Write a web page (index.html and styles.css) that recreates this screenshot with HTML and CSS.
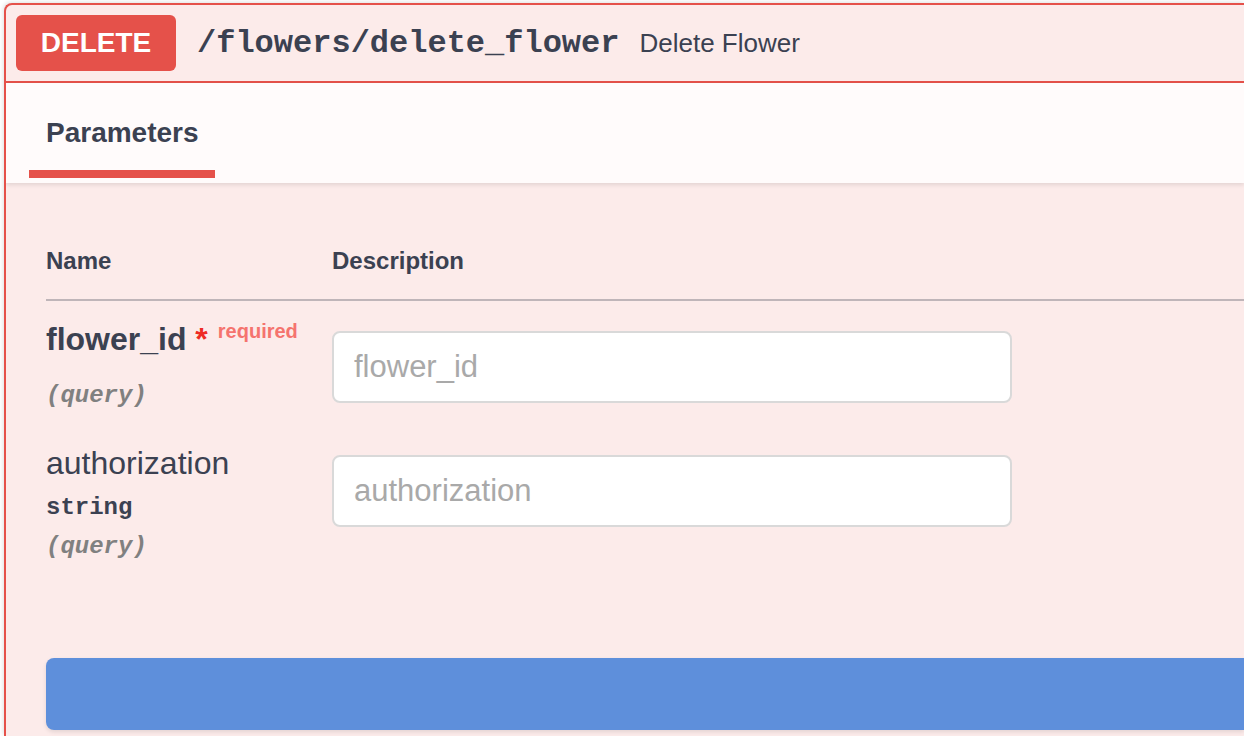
FILE: index.html
```html
<!DOCTYPE html>
<html>
<head>
<meta charset="utf-8">
<link rel="stylesheet" href="styles.css">
</head>
<body>
<div class="opblock">
  <div class="summary">
    <span class="method">DELETE</span>
    <span class="path">/flowers/delete_flower</span>
    <span class="summary-desc">Delete Flower</span>
  </div>
  <div class="section-header">
    <div class="tab">Parameters</div>
  </div>
  <div class="table-container">
    <div class="thead">
      <div class="th">Name</div>
      <div class="th">Description</div>
    </div>
    <div class="prow">
      <div class="pcol">
        <div class="pname required">flower_id<span class="star">&nbsp;*</span><span class="req">required</span></div>
        <div class="ptype"></div>
        <div class="pin">(query)</div>
      </div>
      <div class="dcol">
        <input class="pinput" type="text" placeholder="flower_id">
      </div>
    </div>
    <div class="prow">
      <div class="pcol">
        <div class="pname">authorization</div>
        <div class="ptype">string</div>
        <div class="pin">(query)</div>
      </div>
      <div class="dcol">
        <input class="pinput" type="text" placeholder="authorization">
      </div>
    </div>
    <div class="execute-wrapper">
      <button class="execute" type="button"></button>
    </div>
  </div>
</div>
</body>
</html>
```

FILE: styles.css
```css
html, body {
  margin: 0;
  padding: 0;
  overflow: hidden;
  background: #ffffff;
}

body {
  font-family: "Liberation Sans", Arial, sans-serif;
  color: #3b4151;
  width: 1244px;
  height: 736px;
}

.opblock {
  box-sizing: border-box;
  margin: 3px 0 0 4px;
  width: 1240px;
  height: 733px;
  border: 2px solid #e5514a;
  border-right: none;
  border-bottom: none;
  border-radius: 8px 0 0 0;
  background: #fcebea;
  box-shadow: -1px -1px 4px rgba(0, 0, 0, 0.12);
  overflow: hidden;
}

.summary {
  display: flex;
  align-items: center;
  padding: 10px;
  border-bottom: 2px solid #e5514a;
}

.method {
  display: flex;
  align-items: center;
  justify-content: center;
  width: 160px;
  height: 56px;
  border-radius: 6px;
  background: #e5514a;
  color: #ffffff;
  font-size: 28px;
  font-weight: 700;
}

.path {
  padding: 0 20px 0 21px;
  font-family: "Liberation Mono", "Courier New", monospace;
  font-size: 32px;
  font-weight: 700;
  color: #3b4151;
}

.summary-desc {
  font-size: 26px;
  color: #3b4151;
}

.section-header {
  display: flex;
  align-items: center;
  height: 100px;
  padding: 0 40px;
  background: rgba(255, 255, 255, 0.8);
  box-shadow: 0 2px 4px rgba(0, 0, 0, 0.1);
}

.tab {
  position: relative;
  font-size: 28px;
  font-weight: 700;
  line-height: 32px;
  color: #3b4151;
}

.tab::after {
  content: "";
  position: absolute;
  left: -17px;
  right: -16px;
  bottom: -29px;
  height: 8px;
  background: #e5514a;
}

.table-container {
  padding: 40px 0 0 40px;
}

.thead {
  display: grid;
  grid-template-columns: 286px 1fr;
  padding: 24px 0;
  border-bottom: 2px solid #bfb5b9;
}

.th {
  font-size: 24px;
  font-weight: 700;
  color: #3b4151;
}

.prow {
  display: grid;
  grid-template-columns: 286px 1fr;
  padding: 20px 0 16px;
}

.pname {
  font-size: 32px;
  color: #3b4151;
}

.pname.required {
  font-weight: 700;
}

.star {
  color: #ee2b24;
}

.req {
  position: relative;
  top: -12px;
  padding: 10px;
  font-size: 20px;
  font-weight: 700;
  color: #f5736e;
}

.ptype {
  padding: 12px 0;
  font-family: "Liberation Mono", "Courier New", monospace;
  font-size: 24px;
  font-weight: 700;
  color: #3b4151;
}

.pin {
  font-family: "Liberation Mono", "Courier New", monospace;
  font-size: 24px;
  font-style: italic;
  font-weight: 700;
  color: #808080;
}

.dcol {
  padding-top: 10px;
}

.pinput {
  display: block;
  box-sizing: border-box;
  width: 680px;
  height: 72px;
  margin: 0;
  padding: 0 20px;
  border: 2px solid #d9d9d9;
  border-radius: 8px;
  background: #ffffff;
  font-family: "Liberation Sans", Arial, sans-serif;
  font-size: 31px;
  color: #3b4151;
  outline: none;
}

.pinput::placeholder {
  color: #a9a9a9;
}

.execute-wrapper {
  padding-top: 82px;
}

.execute {
  display: block;
  width: 100%;
  height: 72px;
  border: none;
  border-radius: 8px 0 0 8px;
  background: #5e8fdb;
  box-shadow: 0 2px 4px rgba(0, 0, 0, 0.1);
}
```
